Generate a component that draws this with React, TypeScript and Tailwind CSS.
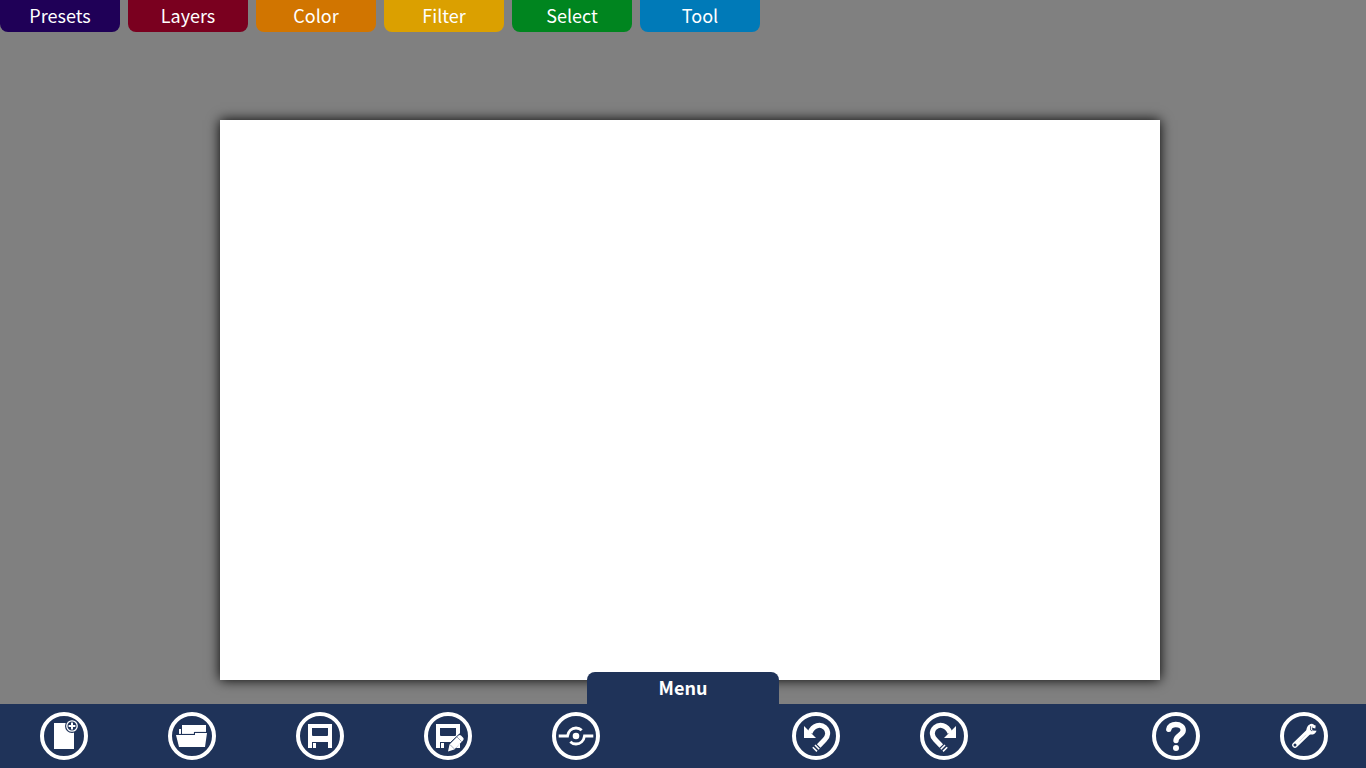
import type { ReactNode } from "react";

const tabs = [
  { label: "Presets", color: "bg-[#1f0057]" },
  { label: "Layers", color: "bg-[#7a001f]" },
  { label: "Color", color: "bg-[#d17500]" },
  { label: "Filter", color: "bg-[#dba000]" },
  { label: "Select", color: "bg-[#00851f]" },
  { label: "Tool", color: "bg-[#007ab8]" },
];

function RoundButton({ label, children }: { label: string; children: ReactNode }) {
  return (
    <button type="button" aria-label={label} className="size-16 shrink-0 cursor-pointer text-[#1f3359]">
      <svg viewBox="0 0 64 64" className="size-16" aria-hidden="true">
        <circle cx="32" cy="32" r="22" fill="none" stroke="#fff" strokeWidth="4" />
        {children}
      </svg>
    </button>
  );
}

function NewIcon() {
  return (
    <>
      <path d="M22 19h20v26H22z" fill="#fff" />
      <circle cx="40" cy="22" r="7" fill="currentColor" />
      <circle cx="40" cy="22" r="5.2" fill="currentColor" stroke="#fff" strokeWidth="1.3" />
      <path d="M40 18.6v6.8M36.6 22h6.8" stroke="#fff" strokeWidth="2" />
    </>
  );
}

function OpenIcon() {
  return (
    <g fill="#fff">
      <path d="M22 21h24v7H34v2H22z" />
      <path d="M19 25h2v5h-2z" />
      <path d="M16 31h19v-2h12l-2 14H19z" />
      <path d="M16 30.4h18.4v-2H46.500" fill="none" stroke="currentColor" strokeWidth=".9" />
    </g>
  );
}

function Floppy() {
  return (
    <path
      fill="#fff"
      fillRule="evenodd"
      d="M20 20h24v24h-4v-6H24v6h-4zM24 24v7q0 1 1 1h14q1 0 1-1v-7zM25 39h3v5h-3z"
    />
  );
}

function SaveAsIcon() {
  return (
    <>
      <Floppy />
      <path d="M31.500 47.500l2-8L43 30.500l2-1.500 4 4-1.500 2L38 45.500z" fill="currentColor" stroke="currentColor" strokeWidth="1" />
      <path d="M32 47.500l1.500-7.100 8.700-8.600q1.500-1.400 2.800-.2l2.200 2.200q1.200 1.300-.2 2.600L38.300 45.500z" fill="#fff" />
      <path d="M34 40.600l4.300 4.300M41 33l4.600 4.600" stroke="currentColor" strokeOpacity=".6" strokeWidth=".7" />
    </>
  );
}

function ShareIcon() {
  return (
    <>
      <circle cx="32" cy="32" r="3.3" fill="#fff" />
      <g fill="none" stroke="#fff" strokeWidth="2.8">
        <path d="M14.7 32h8.8c.7-4.7 4-8 8.5-8 2.2 0 4.2.8 5.7 2.3" />
        <path d="M49.3 32h-8.8c-.7 4.7-4 8-8.5 8-2.2 0-4.2-.8-5.7-2.3" />
      </g>
    </>
  );
}

function CurvedArrow() {
  return (
    <>
      <path d="M20 22v12h12l-3-3z" fill="#fff" />
      <path d="M26 28.8C29 20.8 36.500 19.700 41 23.500c4 3.800 3.200 8.800-.3 12.300L34.700 41.900" fill="none" stroke="#fff" strokeWidth="5" />
      <path d="M31 41l4.200 4.200M28.800 43.200l4.200 4.200" stroke="#fff" strokeWidth="1.6" />
    </>
  );
}

function HelpIcon() {
  return (
    <>
      <path
        d="M24.8 25.4c.4-3 3.2-4.9 7-4.9 4.4 0 7.4 2.2 7.4 5.7 0 5-7.2 5.4-7.2 10.3"
        fill="none"
        stroke="#fff"
        strokeWidth="5.4"
        strokeLinecap="round"
      />
      <circle cx="32" cy="44" r="3" fill="#fff" />
    </>
  );
}

function WrenchIcon() {
  return (
    <>
      <path d="M23 41L37 27.5" stroke="#fff" strokeWidth="5.6" strokeLinecap="round" />
      <path d="M34.5 29c-.7-5 1.2-8.6 5.5-9.2l2 .9-2 2.6.4 3.200 4.200.2c-1.2 3.200-3.500 4.300-6.800 3.800z" fill="#fff" />
      <path d="M40.200 20.400l3.500 1.200-.4 2.800-3-.6z" fill="#fff" />
      <path d="M38.600 22.200v3.800l1.500 1" fill="none" stroke="currentColor" strokeWidth=".8" />
      <circle cx="23" cy="41" r="1.5" fill="currentColor" />
      <path d="M27.500 37.500l6.500-6.800" stroke="currentColor" strokeOpacity=".2" strokeWidth="1" />
    </>
  );
}

export default function App() {
  return (
    <div className="flex h-screen flex-col bg-[#808080] font-['Noto_Sans_CJK_SC',sans-serif] text-white">
      <header>
        <nav className="flex gap-2" aria-label="Panels">
          {tabs.map((tab) => (
            <button
              key={tab.label}
              type="button"
              className={`h-8 w-30 cursor-pointer rounded-b-lg pb-0.5 text-lg leading-7 ${tab.color}`}
            >
              {tab.label}
            </button>
          ))}
        </nav>
      </header>

      <main className="flex flex-1 pt-22 pr-[206px] pb-6 pl-[220px]">
        <div className="flex-1 bg-white shadow-[0_0_12px_#000]" />
      </main>

      <footer className="relative bg-[#1f3359]">
        <button
          type="button"
          className="absolute bottom-full left-1/2 h-8 w-48 -translate-x-1/2 cursor-pointer rounded-t-lg bg-[#1f3359] pb-0.5 text-lg leading-7 font-bold"
        >
          Menu
        </button>
        <div className="flex pr-[30px] pl-8">
          <div className="flex gap-16">
            <RoundButton label="New"><NewIcon /></RoundButton>
            <RoundButton label="Open"><OpenIcon /></RoundButton>
            <RoundButton label="Save"><Floppy /></RoundButton>
            <RoundButton label="Save as"><SaveAsIcon /></RoundButton>
            <RoundButton label="Share"><ShareIcon /></RoundButton>
          </div>
          <div className="ml-44 flex gap-16">
            <RoundButton label="Undo"><CurvedArrow /></RoundButton>
            <RoundButton label="Redo">
              <g transform="matrix(-1 0 0 1 64 0)"><CurvedArrow /></g>
            </RoundButton>
          </div>
          <div className="ml-auto flex gap-16">
            <RoundButton label="Help"><HelpIcon /></RoundButton>
            <RoundButton label="Settings"><WrenchIcon /></RoundButton>
          </div>
        </div>
      </footer>
    </div>
  );
}
